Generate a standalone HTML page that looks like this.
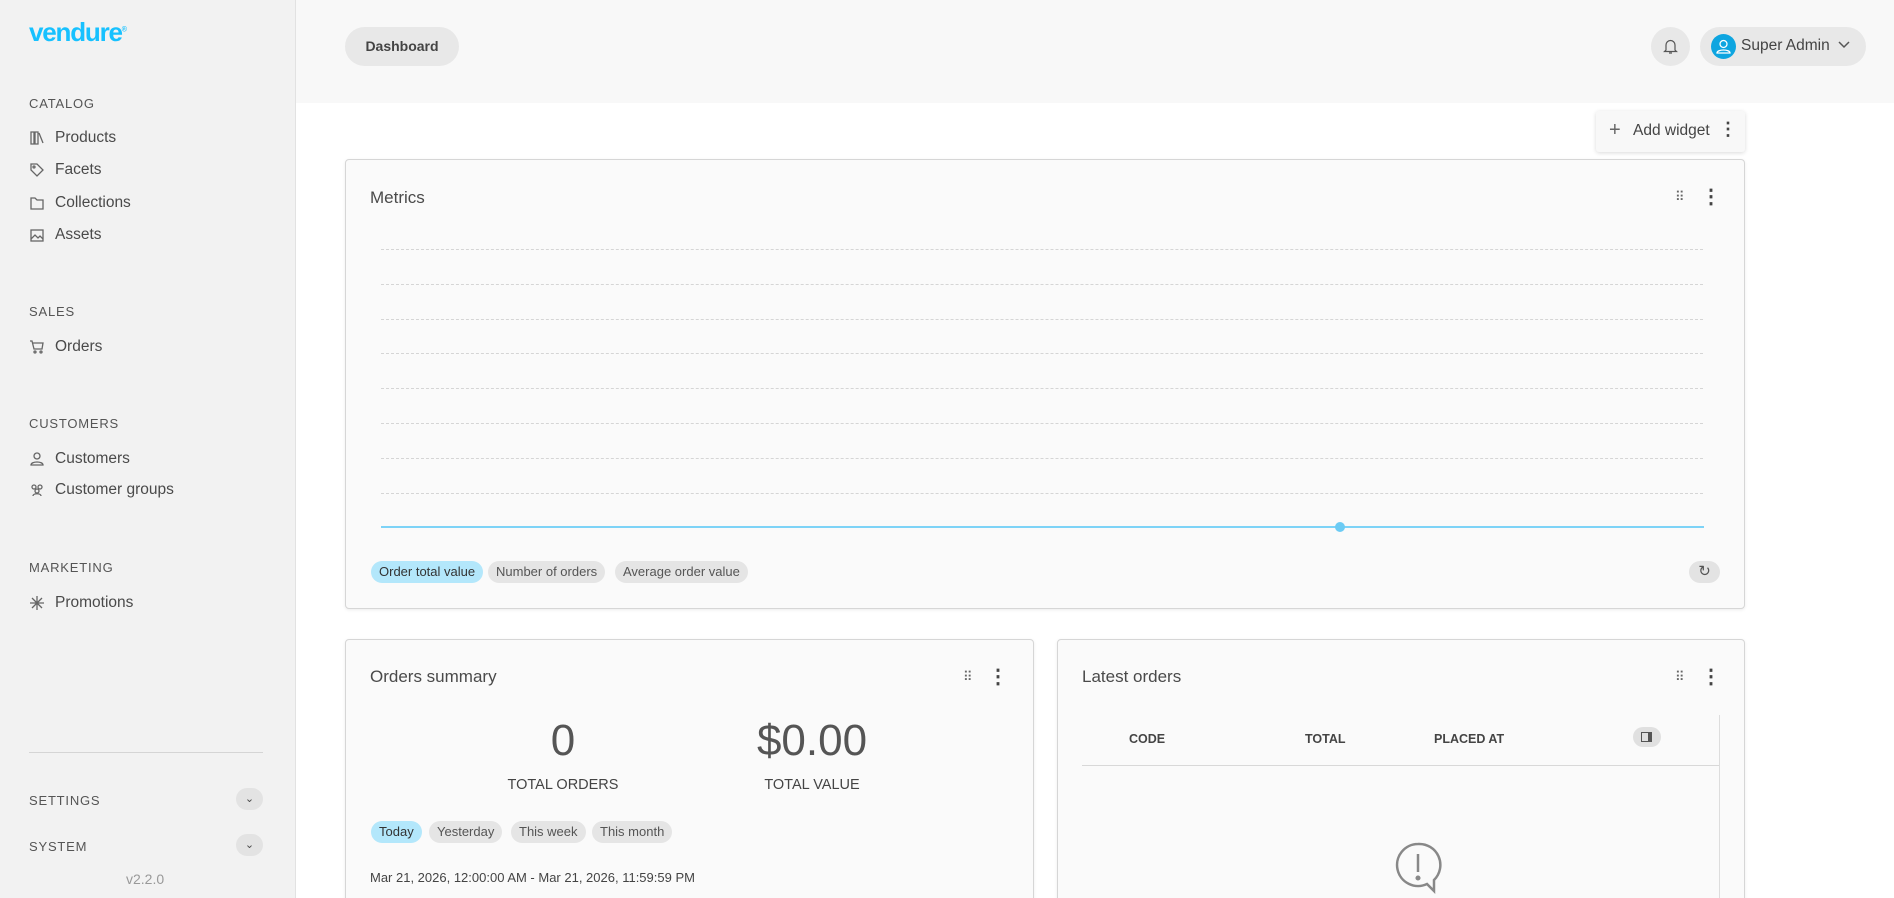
<!DOCTYPE html>
<html><head><meta charset="utf-8"><style>
*{box-sizing:border-box;margin:0;padding:0}
html,body{width:1894px;height:898px;overflow:hidden}
body{background:#fff;font-family:"Liberation Sans",sans-serif;color:#4a4a4a}
#w{position:relative;width:1894px;height:898px;overflow:hidden}
.a{position:absolute}
.side{left:0;top:0;width:296px;height:898px;background:#f2f2f2;border-right:1px solid #e2e2e2}
.sh{font-size:13px;letter-spacing:.8px;color:#555;left:29px}
.it{left:29px;font-size:15.5px;color:#4a4a4a;display:flex;align-items:center;gap:10px}
.it svg{width:16px;height:16px;stroke:#666;fill:none;stroke-width:1.3}
.hdr{left:296px;top:0;width:1598px;height:103px;background:#f8f8f8}
.card{background:#fafafa;border:1px solid #d6d6d6;border-radius:4px;box-shadow:0 1px 3px rgba(0,0,0,.08)}
.title{font-size:17px;color:#4a4a4a}
.chip{height:22px;border-radius:11px;background:#e5e5e5;font-size:13px;color:#555;padding:0 8px;line-height:22px}
.chip.on{background:#b3e7fb;color:#333}
.gl{left:381px;width:1322px;border-top:1px dashed #d5d5d5;height:0}
.dots{font-size:20px;font-weight:bold;color:#444}
</style></head><body><div id="w">
<div class="a side"></div>
<div class="a" style="left:29px;top:17px;font-size:26px;font-weight:bold;color:#17c1ff;letter-spacing:-1.2px">vendure<sup style="font-size:7px">®</sup></div>
<div class="a sh" style="top:96px">CATALOG</div>
<div class="a it" style="top:129px"><svg viewBox="0 0 16 16"><path d="M2 2h3v12H2zM6 2h3v12H6zM10 3l4 10"/></svg>Products</div>
<div class="a it" style="top:161px"><svg viewBox="0 0 16 16"><path d="M2 2h6l6 6-6 6-6-6z"/><circle cx="5" cy="5" r="1"/></svg>Facets</div>
<div class="a it" style="top:194px"><svg viewBox="0 0 16 16"><path d="M2 3h4l2 2h6v9H2z"/></svg>Collections</div>
<div class="a it" style="top:226px"><svg viewBox="0 0 16 16"><rect x="2" y="3" width="12" height="11"/><path d="M2 12l4-4 3 3 2-2 3 3"/></svg>Assets</div>
<div class="a sh" style="top:304px">SALES</div>
<div class="a it" style="top:338px"><svg viewBox="0 0 16 16"><path d="M1 2h2l2 8h8l1-6H4"/><circle cx="6" cy="13" r="1"/><circle cx="12" cy="13" r="1"/></svg>Orders</div>
<div class="a sh" style="top:416px">CUSTOMERS</div>
<div class="a it" style="top:450px"><svg viewBox="0 0 16 16"><circle cx="8" cy="5" r="3"/><path d="M2 14c0-4 12-4 12 0z"/></svg>Customers</div>
<div class="a it" style="top:481px"><svg viewBox="0 0 16 16"><circle cx="5" cy="5" r="2"/><circle cx="11" cy="5" r="2"/><circle cx="8" cy="9" r="2"/><path d="M4 14c0-3 8-3 8 0"/></svg>Customer groups</div>
<div class="a sh" style="top:560px">MARKETING</div>
<div class="a it" style="top:594px"><svg viewBox="0 0 16 16"><path d="M8 1v14M1 8h14M3 3l10 10M13 3L3 13"/></svg>Promotions</div>
<div class="a" style="left:29px;top:752px;width:234px;border-top:1px solid #d5d5d5"></div>
<div class="a sh" style="top:793px">SETTINGS</div>
<div class="a" style="left:236px;top:788px;width:27px;height:22px;border-radius:11px;background:#e3e3e3;text-align:center;font-size:11px;line-height:22px">⌄</div>
<div class="a sh" style="top:839px">SYSTEM</div>
<div class="a" style="left:236px;top:834px;width:27px;height:22px;border-radius:11px;background:#e3e3e3;text-align:center;font-size:11px;line-height:22px">⌄</div>
<div class="a" style="left:126px;top:871px;font-size:14px;color:#999">v2.2.0</div>

<div class="a hdr"></div>
<div class="a" style="left:345px;top:27px;width:114px;height:39px;border-radius:20px;background:#e8e8e8;font-size:14px;font-weight:bold;color:#444;text-align:center;line-height:39px">Dashboard</div>
<div class="a" style="left:1651px;top:27px;width:39px;height:39px;border-radius:50%;background:#e8e8e8"><svg class="a" style="left:12px;top:11px" width="15" height="17" viewBox="0 0 15 17" fill="none" stroke="#555" stroke-width="1.2"><path d="M3 12V7a4.5 4.5 0 019 0v5l1.5 1.5h-12z M6 15h3"/></svg></div>
<div class="a" style="left:1700px;top:27px;width:166px;height:39px;border-radius:20px;background:#e8e8e8"></div>
<div class="a" style="left:1711px;top:34px;width:25px;height:25px;border-radius:50%;background:#0ea5e0"><svg width="25" height="25" viewBox="0 0 25 25" fill="none" stroke="#fff" stroke-width="1.3"><circle cx="12.5" cy="10" r="3.5"/><path d="M6 19c0-4 13-4 13 0z"/></svg></div>
<div class="a" style="left:1741px;top:37px;font-size:15.5px;color:#444">Super Admin</div>
<svg class="a" style="left:1838px;top:41px" width="12" height="8" viewBox="0 0 12 8" fill="none" stroke="#555" stroke-width="1.5"><path d="M1 1l5 5 5-5"/></svg>

<div class="a" style="left:1596px;top:111px;width:149px;height:41px;background:#f8f8f8;border-radius:3px;box-shadow:0 1px 4px rgba(0,0,0,.15)"></div>
<div class="a" style="left:1609px;top:119px;font-size:20px;color:#666">+</div>
<div class="a" style="left:1633px;top:122px;font-size:15.5px;color:#444">Add widget</div>
<div class="a dots" style="left:1719px;top:119px;font-size:18px">⋮</div>

<div class="a card" style="left:345px;top:159px;width:1400px;height:450px"></div>
<div class="a title" style="left:370px;top:188px">Metrics</div>
<div class="a" style="left:1675px;top:189px;font-size:13px;color:#666">⠿</div>
<div class="a dots" style="left:1701px;top:184px">⋮</div>
<div class="a gl" style="top:249px"></div><div class="a gl" style="top:284px"></div><div class="a gl" style="top:319px"></div><div class="a gl" style="top:353px"></div><div class="a gl" style="top:388px"></div><div class="a gl" style="top:423px"></div><div class="a gl" style="top:458px"></div><div class="a gl" style="top:493px"></div>
<div class="a" style="left:381px;top:526px;width:1323px;height:2px;background:#7dd3f7"></div>
<div class="a" style="left:1335px;top:522px;width:10px;height:10px;border-radius:50%;background:#6ccbf4"></div>
<div class="a chip on" style="left:371px;top:561px">Order total value</div>
<div class="a chip" style="left:488px;top:561px">Number of orders</div>
<div class="a chip" style="left:615px;top:561px">Average order value</div>
<div class="a" style="left:1689px;top:561px;width:31px;height:22px;border-radius:11px;background:#e3e3e3;text-align:center;line-height:22px;font-size:15px;color:#555">↻</div>

<div class="a card" style="left:345px;top:639px;width:689px;height:300px"></div>
<div class="a title" style="left:370px;top:667px">Orders summary</div>
<div class="a" style="left:963px;top:669px;font-size:13px;color:#666">⠿</div>
<div class="a dots" style="left:988px;top:664px">⋮</div>
<div class="a" style="left:513px;top:716px;width:100px;text-align:center;font-size:44px;color:#555">0</div>
<div class="a" style="left:463px;top:777px;width:200px;text-align:center;font-size:14.5px;color:#444">TOTAL ORDERS</div>
<div class="a" style="left:712px;top:716px;width:200px;text-align:center;font-size:44px;color:#555">$0.00</div>
<div class="a" style="left:712px;top:777px;width:200px;text-align:center;font-size:14.5px;color:#444">TOTAL VALUE</div>
<div class="a chip on" style="left:371px;top:821px">Today</div>
<div class="a chip" style="left:429px;top:821px">Yesterday</div>
<div class="a chip" style="left:511px;top:821px">This week</div>
<div class="a chip" style="left:592px;top:821px">This month</div>
<div class="a" style="left:370px;top:870px;font-size:13px;color:#444">Mar 21, 2026, 12:00:00 AM - Mar 21, 2026, 11:59:59 PM</div>

<div class="a card" style="left:1057px;top:639px;width:688px;height:300px"></div>
<div class="a title" style="left:1082px;top:667px">Latest orders</div>
<div class="a" style="left:1675px;top:669px;font-size:13px;color:#666">⠿</div>
<div class="a dots" style="left:1701px;top:664px">⋮</div>
<div class="a" style="left:1719px;top:715px;height:200px;border-left:1px solid #ddd"></div>
<div class="a" style="left:1129px;top:732px;font-size:12.5px;font-weight:bold;color:#444">CODE</div>
<div class="a" style="left:1305px;top:732px;font-size:12.5px;font-weight:bold;color:#444">TOTAL</div>
<div class="a" style="left:1434px;top:732px;font-size:12.5px;font-weight:bold;color:#444">PLACED AT</div>
<div class="a" style="left:1633px;top:727px;width:28px;height:20px;border-radius:10px;background:#e0e0e0"><div class="a" style="left:8px;top:5px;width:11px;height:10px;border:1.5px solid #555;border-right-width:4px"></div></div>
<div class="a" style="left:1082px;top:765px;width:637px;border-top:1px solid #d8d8d8"></div>
<svg class="a" style="left:1393px;top:842px" width="50" height="56" viewBox="0 0 50 56" fill="none" stroke="#888" stroke-width="2.5"><path d="M25 2a21 21 0 1 0 9 40l7 7v-11a21 21 0 0 0-16-36z"/><path d="M25 12v18"/><circle cx="25" cy="36" r="1.3" fill="#888"/></svg>
</div></body></html>
